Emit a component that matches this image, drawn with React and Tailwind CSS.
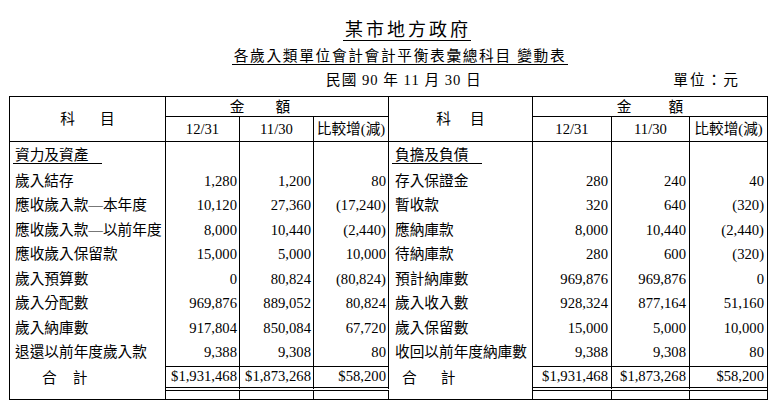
import React from 'react';

const rows = [
  ['歲入結存', '1,280', '1,200', '80', '存入保證金', '280', '240', '40'],
  ['應收歲入款—本年度', '10,120', '27,360', '(17,240)', '暫收款', '320', '640', '(320)'],
  ['應收歲入款—以前年度', '8,000', '10,440', '(2,440)', '應納庫款', '8,000', '10,440', '(2,440)'],
  ['應收歲入保留款', '15,000', '5,000', '10,000', '待納庫款', '280', '600', '(320)'],
  ['歲入預算數', '0', '80,824', '(80,824)', '預計納庫數', '969,876', '969,876', '0'],
  ['歲入分配數', '969,876', '889,052', '80,824', '歲入收入數', '928,324', '877,164', '51,160'],
  ['歲入納庫數', '917,804', '850,084', '67,720', '歲入保留數', '15,000', '5,000', '10,000'],
  ['退還以前年度歲入款', '9,388', '9,308', '80', '收回以前年度納庫數', '9,388', '9,308', '80'],
];

const nameL = 'border-r border-black pl-[5px] pb-[3px] text-left';
const numL = 'border-r border-black pr-[2px] pb-[3px] text-right';
const nameR = 'border-r border-black pl-[6px] pb-[3px] text-left';
const numR = 'border-r border-black pr-[3px] pb-[3px] text-right';
const numRLast = 'pr-[3px] pb-[3px] text-right';

const totL = 'border-r border-t border-b-4 border-double border-black pr-[2px] pb-[2px] text-right';
const totR = 'border-r border-t border-b-4 border-double border-black pr-[3px] pb-[2px] text-right';
const totRLast = 'border-t border-b-4 border-double border-black pr-[3px] pb-[2px] text-right';

export default function App() {
  return (
    <div className="w-[774px] h-[406px] overflow-hidden bg-white text-black font-['Liberation_Serif','Noto_Sans_CJK_TC',serif] text-[14.67px] whitespace-nowrap">
      {/* titles */}
      <div className="flex justify-center pt-[20px] pl-[40px]">
        <span className="inline-block pl-[2px] border-b border-black text-[18px] leading-[20px] tracking-[3px]">
          某市地方政府
        </span>
      </div>
      <div className="flex justify-center mt-[8px] pl-[26px]">
        <span className="inline-block px-[2px] border-b border-black leading-[15px] tracking-[1.7px]">
          各歲入類單位會計會計平衡表彙總科目 變動表
        </span>
      </div>
      <div className="flex mt-[7px] leading-[16px]">
        <span className="ml-[326px] tracking-[1px]">民國 90 年 11 月 30 日</span>
        <span className="ml-auto mr-[34px] tracking-[2px]">單位：元</span>
      </div>

      <table className="mt-[8px] ml-[9px] w-[759px] table-fixed border-separate border-spacing-0 border border-black leading-[18px]">
        <colgroup>
          <col className="w-[156px]" />
          <col className="w-[74px]" />
          <col className="w-[74px]" />
          <col className="w-[75px]" />
          <col className="w-[144px]" />
          <col className="w-[79px]" />
          <col className="w-[78px]" />
          <col className="w-[77px]" />
        </colgroup>
        <thead>
          <tr className="h-[20px]">
            <td rowSpan={2} className="border-r border-b border-black">
              <div className="flex justify-center gap-[25px]">
                <span>科</span>
                <span>目</span>
              </div>
            </td>
            <td colSpan={3} className="border-r border-b border-black">
              <div className="flex justify-center gap-[31px] pr-[34px]">
                <span>金</span>
                <span>額</span>
              </div>
            </td>
            <td rowSpan={2} className="border-r border-b border-black">
              <div className="flex justify-center gap-[19px]">
                <span>科</span>
                <span>目</span>
              </div>
            </td>
            <td colSpan={3} className="border-b border-black">
              <div className="flex justify-center gap-[37px]">
                <span>金</span>
                <span>額</span>
              </div>
            </td>
          </tr>
          <tr className="h-[25px] text-center">
            <td className="border-r border-b border-black">12/31</td>
            <td className="border-r border-b border-black">11/30</td>
            <td className="border-r border-b border-black">比較增(減)</td>
            <td className="border-r border-b border-black">12/31</td>
            <td className="border-r border-b border-black">11/30</td>
            <td className="border-b border-black">比較增(減)</td>
          </tr>
        </thead>
        <tbody>
          <tr className="h-[28px]">
            <td className="border-r border-black align-top pt-[6px]">
              <span className="block w-[89px] ml-[3px] pl-[2px] border-b border-black leading-[15px]">資力及資產</span>
            </td>
            <td className="border-r border-black" />
            <td className="border-r border-black" />
            <td className="border-r border-black" />
            <td className="border-r border-black align-top pt-[6px]">
              <span className="block w-[90px] ml-[3px] pl-[3px] border-b border-black leading-[15px]">負擔及負債</span>
            </td>
            <td className="border-r border-black" />
            <td className="border-r border-black" />
            <td />
          </tr>
          {rows.map((r) => (
            <tr key={r[0]} className="h-[24.5px]">
              <td className={nameL}>{r[0]}</td>
              <td className={numL}>{r[1]}</td>
              <td className={numL}>{r[2]}</td>
              <td className={numL}>{r[3]}</td>
              <td className={nameR}>{r[4]}</td>
              <td className={numR}>{r[5]}</td>
              <td className={numR}>{r[6]}</td>
              <td className={numRLast}>{r[7]}</td>
            </tr>
          ))}
          <tr className="h-[25px]">
            <td className="border-r border-black pb-[2px]">
              <div className="flex gap-[16px] pl-[32px]">
                <span>合</span>
                <span>計</span>
              </div>
            </td>
            <td className={totL}>$1,931,468</td>
            <td className={totL}>$1,873,268</td>
            <td className={totL}>$58,200</td>
            <td className="border-r border-black pb-[2px]">
              <div className="flex gap-[24px] pl-[13px]">
                <span>合</span>
                <span>計</span>
              </div>
            </td>
            <td className={totR}>$1,931,468</td>
            <td className={totR}>$1,873,268</td>
            <td className={totRLast}>$58,200</td>
          </tr>
          <tr className="h-[8px]">
            <td className="border-r border-black" />
            <td className="border-r border-black" />
            <td className="border-r border-black" />
            <td className="border-r border-black" />
            <td className="border-r border-black" />
            <td className="border-r border-black" />
            <td className="border-r border-black" />
            <td />
          </tr>
        </tbody>
      </table>
    </div>
  );
}
